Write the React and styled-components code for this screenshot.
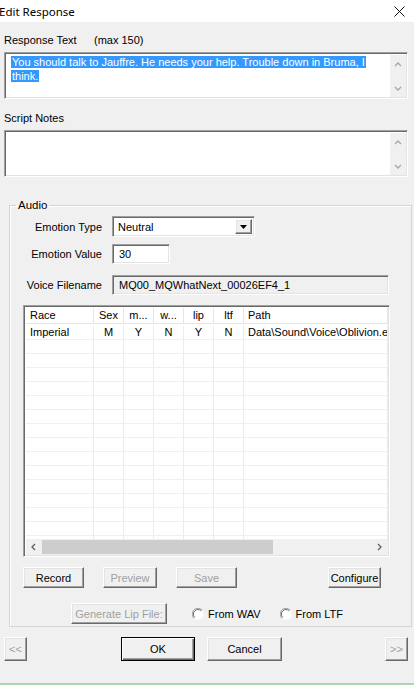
import React from 'react'
import styled, { createGlobalStyle, css } from 'styled-components'

const GlobalStyle = createGlobalStyle`
  html, body {
    margin: 0;
    padding: 0;
    background: #f0f0f0;
  }
  body {
    font-family: "Liberation Sans", Arial, sans-serif;
    font-size: 11px;
    color: #000;
  }
`

const sunken = css`
  box-sizing: border-box;
  border: 1px solid;
  border-color: #a0a0a0 #ffffff #ffffff #a0a0a0;
  box-shadow: inset 1px 1px 0 #696969, inset -1px -1px 0 #e3e3e3;
`

const raised = css`
  box-sizing: border-box;
  border: 1px solid;
  border-color: #ffffff #696969 #696969 #ffffff;
  box-shadow: inset -1px -1px 0 #a0a0a0, inset 1px 1px 0 #e3e3e3;
`

const columns = [
  { key: 'race', label: 'Race', align: 'left' },
  { key: 'sex', label: 'Sex', align: 'center' },
  { key: 'm', label: 'm...', align: 'center' },
  { key: 'w', label: 'w...', align: 'center' },
  { key: 'lip', label: 'lip', align: 'center' },
  { key: 'ltf', label: 'ltf', align: 'center' },
  { key: 'path', label: 'Path', align: 'left' },
]

const rows = [
  { race: 'Imperial', sex: 'M', m: 'Y', w: 'N', lip: 'Y', ltf: 'N', path: 'Data\\Sound\\Voice\\Oblivion.esm' },
]

const Chevron = ({ dir, color = '#a6a6a6' }) => {
  const pts = {
    up: '1,5 4,2 7,5',
    down: '1,2 4,5 7,2',
    left: '5,1 2,4 5,7',
    right: '2,1 5,4 2,7',
  }[dir]
  return (
    <svg width="8" height="8" viewBox="0 0 8 8">
      <polyline points={pts} fill="none" stroke={color} strokeWidth="1.3" />
    </svg>
  )
}

const Radio = () => (
  <svg width="12" height="12" viewBox="0 0 12 12">
    <circle cx="6" cy="6" r="5.5" fill="#ffffff" />
    <path d="M10.2 2.1 A5.5 5.5 0 0 0 1.8 10.2" fill="none" stroke="#a0a0a0" strokeWidth="1" />
    <path d="M9.3 2.9 A4.3 4.3 0 0 0 2.7 9.3" fill="none" stroke="#696969" strokeWidth="1" />
  </svg>
)

const EditResponse = () => {
  const emptyRows = Array.from({ length: 16 - rows.length }, () => ({}))
  return (
    <Window>
      <TitleBar>
        <Title>Edit Response</Title>
        <svg width="11" height="11" viewBox="0 0 11 11">
          <path d="M0.5 0.5 L10.5 10.5 M10.5 0.5 L0.5 10.5" stroke="#111" strokeWidth="1" />
        </svg>
      </TitleBar>

      <Body>
        <FieldLabel $top={11}>
          <LabelText $width={90}>Response Text</LabelText>
          <span>(max 150)</span>
        </FieldLabel>
        <EditBox $top={5}>
          <EditText>
            <Selected>You should talk to Jauffre. He needs your help. Trouble down in Bruma, I</Selected>
            <br />
            <Selected>think.</Selected>
          </EditText>
          <VScroll>
            <Chevron dir="up" />
            <Chevron dir="down" />
          </VScroll>
        </EditBox>

        <FieldLabel $top={12}>
          <LabelText>Script Notes</LabelText>
        </FieldLabel>
        <EditBox $top={5}>
          <EditText />
          <VScroll>
            <Chevron dir="up" />
            <Chevron dir="down" />
          </VScroll>
        </EditBox>

        <Group>
          <Legend>Audio</Legend>

          <FormRow $top={4}>
            <FormLabel>Emotion Type</FormLabel>
            <Select>
              <span>Neutral</span>
              <DropButton>
                <svg width="7" height="4" viewBox="0 0 7 4">
                  <polygon points="0,0 7,0 3.5,4" fill="#000" />
                </svg>
              </DropButton>
            </Select>
          </FormRow>

          <FormRow $top={7}>
            <FormLabel>Emotion Value</FormLabel>
            <Input $width={58}>30</Input>
          </FormRow>

          <FormRow $top={11}>
            <FormLabel>Voice Filename</FormLabel>
            <Input $width={277} $readOnly>MQ00_MQWhatNext_00026EF4_1</Input>
          </FormRow>

          <List>
            <HeaderRow>
              {columns.map((c) => (
                <HeaderCell key={c.key} $align={c.align}>{c.label}</HeaderCell>
              ))}
            </HeaderRow>
            <ListBody>
              {[...rows, ...emptyRows].map((r, i) => (
                <ListRow key={i}>
                  {columns.map((c) => (
                    <Cell key={c.key} $align={c.align}>{r[c.key] || ''}</Cell>
                  ))}
                </ListRow>
              ))}
            </ListBody>
            <HScroll>
              <ScrollArrow><Chevron dir="left" color="#606060" /></ScrollArrow>
              <Track>
                <Thumb />
              </Track>
              <ScrollArrow><Chevron dir="right" color="#606060" /></ScrollArrow>
            </HScroll>
          </List>

          <ButtonRow>
            <Button $width={61}>Record</Button>
            <Button $width={54} $disabled>Preview</Button>
            <Button $width={61} $disabled>Save</Button>
            <Button $width={53} $push>Configure</Button>
          </ButtonRow>

          <LipRow>
            <Button $width={96} $disabled>Generate Lip File:</Button>
            <RadioLabel $left={25}>
              <Radio />
              From WAV
            </RadioLabel>
            <RadioLabel $left={19}>
              <Radio />
              From LTF
            </RadioLabel>
          </LipRow>
        </Group>

        <BottomRow>
          <Button $width={23} $height={24} $disabled>&lt;&lt;</Button>
          <Button $width={74} $height={24} $default $left={94}>OK</Button>
          <Button $width={75} $height={24} $left={12}>Cancel</Button>
          <Button $width={23} $height={24} $disabled $push>&gt;&gt;</Button>
        </BottomRow>
      </Body>
      <StatusLine />
    </Window>
  )
}

const Window = styled.div`
  width: 414px;
  height: 685px;
  overflow: hidden;
  display: flex;
  flex-direction: column;
  background: #f0f0f0;
`
const TitleBar = styled.div`
  height: 22px;
  flex: none;
  background: #ffffff;
  display: flex;
  align-items: center;
  justify-content: space-between;
  padding: 0 9px 0 0;
`
const Title = styled.span`
  font-family: "Noto Sans", "Open Sans", sans-serif;
  font-size: 11.5px;
  margin-left: -1px;
  color: #000;
`
const Body = styled.div`
  flex: 1;
  padding: 0 6px 0 4px;
  display: flex;
  flex-direction: column;
`
const FieldLabel = styled.div`
  height: 14px;
  line-height: 14px;
  margin-top: ${(p) => p.$top}px;
  display: flex;
`
const LabelText = styled.span`
  width: ${(p) => (p.$width ? `${p.$width}px` : 'auto')};
`
const EditBox = styled.div`
  ${sunken};
  margin-top: ${(p) => p.$top}px;
  height: 47px;
  background: #ffffff;
  display: flex;
  padding: 2px 1px 1px 2px;
`
const EditText = styled.div`
  flex: 1;
  padding: 1px 4px;
  line-height: 13.5px;
  white-space: nowrap;
  overflow: hidden;
`
const Selected = styled.span`
  background: #3399ff;
  color: #ffffff;
  padding: 0 1px;
`
const VScroll = styled.div`
  width: 16px;
  background: #f0f0f0;
  display: flex;
  flex-direction: column;
  justify-content: space-between;
  align-items: center;
  padding: 6px 0 4px;
`
const Group = styled.fieldset`
  margin: 21px 0 0 5px;
  width: 403px;
  box-sizing: border-box;
  padding: 0 0 2px 0;
  min-width: 0;
  border: 1px solid #d5d5d5;
  box-shadow: inset 1px 1px 0 #ffffff;
  display: flex;
  flex-direction: column;
`
const Legend = styled.legend`
  margin-left: 6px;
  padding: 0 2px;
  line-height: 14px;
  font-size: 11.5px;
`
const FormRow = styled.div`
  display: flex;
  align-items: center;
  margin-top: ${(p) => p.$top}px;
`
const FormLabel = styled.span`
  width: 92px;
  text-align: right;
  margin-right: 10px;
`
const Select = styled.div`
  ${sunken};
  width: 143px;
  height: 21px;
  background: #ffffff;
  display: flex;
  align-items: center;
  justify-content: space-between;
  padding: 2px 2px 2px 5px;
`
const DropButton = styled.div`
  ${raised};
  width: 17px;
  height: 15px;
  background: #f0f0f0;
  display: flex;
  align-items: center;
  justify-content: center;
`
const Input = styled.div`
  ${sunken};
  width: ${(p) => p.$width}px;
  height: 20px;
  line-height: 18px;
  padding: 0 6px;
  background: ${(p) => (p.$readOnly ? '#f0f0f0' : '#ffffff')};
  white-space: nowrap;
`
const List = styled.div`
  ${sunken};
  margin: 10px 0 0 13px;
  width: 367px;
  height: 252px;
  background: #ffffff;
  display: flex;
  flex-direction: column;
  padding: 2px 1px 1px 2px;
  overflow: hidden;
`
const gridCols = '68px 30px 30px 30px 30px 30px minmax(0, 1fr)'
const HeaderRow = styled.div`
  display: grid;
  grid-template-columns: ${gridCols};
  height: 16px;
  flex: none;
  border-bottom: 1px solid #e5e5e5;
  box-sizing: border-box;
`
const HeaderCell = styled.div`
  text-align: ${(p) => p.$align};
  padding: 0 4px;
  line-height: 15px;
  border-right: 1px solid #e5e5e5;
  white-space: nowrap;
  overflow: hidden;
`
const ListBody = styled.div`
  flex: 1;
  overflow: hidden;
  padding-top: 2px;
`
const ListRow = styled.div`
  display: grid;
  grid-template-columns: ${gridCols};
  height: 14px;
  box-sizing: border-box;
  border-bottom: 1px solid #f0f0f0;
`
const Cell = styled.div`
  text-align: ${(p) => p.$align};
  padding: 0 4px;
  line-height: 13px;
  border-right: 1px solid #ececec;
  white-space: nowrap;
  overflow: hidden;
`
const HScroll = styled.div`
  height: 16px;
  flex: none;
  display: flex;
  background: #f0f0f0;
`
const ScrollArrow = styled.div`
  width: 16px;
  display: flex;
  align-items: center;
  justify-content: center;
`
const Track = styled.div`
  flex: 1;
  display: flex;
  align-items: center;
`
const Thumb = styled.div`
  width: 231px;
  height: 14px;
  background: #cdcdcd;
`
const ButtonRow = styled.div`
  display: flex;
  margin: 10px 30px 0 13px;
  gap: 19px;
`
const Button = styled.button`
  ${raised};
  ${(p) =>
    p.$default &&
    css`
      border-color: #000;
      box-shadow: inset 1px 1px 0 #ffffff, inset -1px -1px 0 #696969, inset -2px -2px 0 #a0a0a0;
    `}
  width: ${(p) => p.$width}px;
  height: ${(p) => p.$height || 21}px;
  margin-left: ${(p) => (p.$push ? 'auto' : p.$left ? `${p.$left}px` : '0')};
  padding: 0;
  background: #f0f0f0;
  font-family: "Liberation Sans", Arial, sans-serif;
  font-size: 11px;
  color: ${(p) => (p.$disabled ? '#a0a0a0' : '#000')};
  white-space: nowrap;
`
const LipRow = styled.div`
  display: flex;
  align-items: center;
  margin: 15px 0 0 61px;
`
const RadioLabel = styled.label`
  display: flex;
  align-items: center;
  gap: 4px;
  margin-left: ${(p) => p.$left}px;
`
const BottomRow = styled.div`
  display: flex;
  margin-top: 10px;
`
const StatusLine = styled.div`
  height: 2px;
  flex: none;
  background: #a8d8ab;
`

export default function App() {
  return (
    <>
      <GlobalStyle />
      <EditResponse />
    </>
  )
}
